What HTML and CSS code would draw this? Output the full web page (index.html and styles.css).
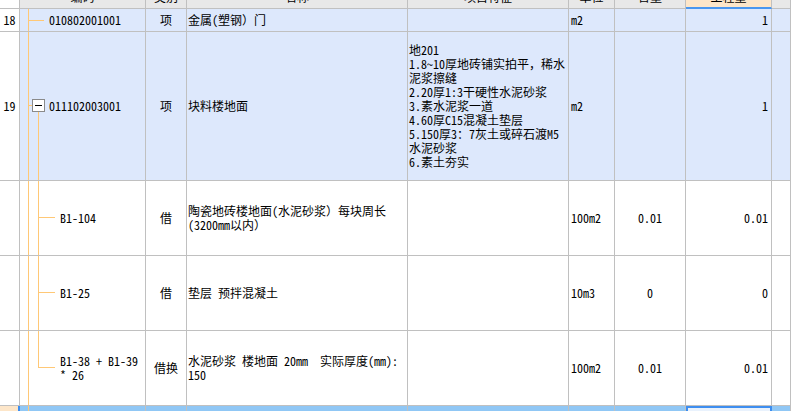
FILE: index.html
```html
<!DOCTYPE html>
<html lang="zh">
<head>
<meta charset="utf-8">
<link rel="stylesheet" href="styles.css">
</head>
<body>
<div class="grid">
  <!-- header -->
  <div class="c h num"></div>
  <div class="c h center"><span class="ht">编码</span></div>
  <div class="c h center"><span class="ht">类别</span></div>
  <div class="c h center"><span class="ht">名称</span></div>
  <div class="c h center"><span class="ht">项目特征</span></div>
  <div class="c h center"><span class="ht">单位</span></div>
  <div class="c h center"><span class="ht">含量</span></div>
  <div class="c h center sel-h"><span class="ht">工程量</span></div>
  <div class="c h"></div>

  <!-- row 18 -->
  <div class="c num center">18</div>
  <div class="c blue code tree-top">010802001001</div>
  <div class="c blue center">项</div>
  <div class="c blue pad">金属(塑钢）门</div>
  <div class="c blue pad"></div>
  <div class="c blue unit">m2</div>
  <div class="c blue center"></div>
  <div class="c blue right">1</div>
  <div class="c blue"></div>

  <!-- row 19 -->
  <div class="c num center">19</div>
  <div class="c blue code tree-parent"><span class="box"><span class="minus"></span></span>011102003001</div>
  <div class="c blue center">项</div>
  <div class="c blue pad">块料楼地面</div>
  <div class="c blue pad">地201<br>1.8~10厚地砖铺实拍平，稀水<br>泥浆擦缝<br>2.20厚1:3干硬性水泥砂浆<br>3.素水泥浆一道<br>4.60厚C15混凝土垫层<br>5.150厚3：7灰土或碎石渡M5<br>水泥砂浆<br>6.素土夯实</div>
  <div class="c blue unit">m2</div>
  <div class="c blue center"></div>
  <div class="c blue right">1</div>
  <div class="c blue"></div>

  <!-- child 1 -->
  <div class="c num"></div>
  <div class="c code tree-child">B1-104</div>
  <div class="c center">借</div>
  <div class="c pad">陶瓷地砖楼地面(水泥砂浆）每块周长<br>(3200mm以内）</div>
  <div class="c pad"></div>
  <div class="c unit">100m2</div>
  <div class="c center">0.01</div>
  <div class="c right">0.01</div>
  <div class="c"></div>

  <!-- child 2 -->
  <div class="c num"></div>
  <div class="c code tree-child">B1-25</div>
  <div class="c center">借</div>
  <div class="c pad">垫层 预拌混凝土</div>
  <div class="c pad"></div>
  <div class="c unit">10m3</div>
  <div class="c center">0</div>
  <div class="c right">0</div>
  <div class="c"></div>

  <!-- child 3 -->
  <div class="c num"></div>
  <div class="c code tree-last">B1-38 + B1-39<br>* 26</div>
  <div class="c center">借换</div>
  <div class="c pad">水泥砂浆 楼地面 20mm&nbsp;&nbsp;实际厚度(mm):<br>150</div>
  <div class="c pad"></div>
  <div class="c unit">100m2</div>
  <div class="c center">0.01</div>
  <div class="c right">0.01</div>
  <div class="c"></div>

  <!-- current row -->
  <div class="c num cur-num"></div>
  <div class="c cur code tree-top-only"></div>
  <div class="c cur"></div>
  <div class="c cur"></div>
  <div class="c cur"></div>
  <div class="c cur"></div>
  <div class="c cur"></div>
  <div class="c cur sel-cell"></div>
  <div class="c cur"></div>
</div>
</body>
</html>
```

FILE: styles.css
```css
html, body {
  margin: 0;
  padding: 0;
  overflow: hidden;
  background: #ffffff;
}

body {
  font-family: "Noto Sans Mono CJK SC", "Noto Sans CJK SC", monospace;
  font-size: 12px;
  line-height: 14px;
  color: #000000;
}

.grid {
  display: grid;
  grid-template-columns: 20px 126px 41px 221px 161px 46px 71px 86px 1fr;
  grid-template-rows: 9px 23px 149px 75px 75px 75px 20px;
  width: 791px;
  height: 411px;
}

.c {
  box-sizing: border-box;
  border-right: 1px solid #c0c0c0;
  border-bottom: 1px solid #c0c0c0;
  display: flex;
  align-items: center;
  white-space: nowrap;
  overflow: hidden;
}

.h {
  background: #e8e8e8;
  align-items: flex-start;
}

.ht {
  display: block;
  margin-top: -10px;
  line-height: 14px;
}

.sel-h {
  background: #fde6c9;
  border-bottom: 2px solid #4a97ef;
}

.center { justify-content: center; text-align: center; }
.right { justify-content: flex-end; padding-right: 3px; }
.pad { padding-left: 1px; }
.unit { padding-left: 2px; }

.num { background: #ffffff; }

.blue { background-color: #dde8fc; }

.code {
  --tree: #ffc876;
  background-repeat: no-repeat;
}

.tree-top {
  padding-left: 29px;
  background-image:
    linear-gradient(var(--tree), var(--tree)),
    linear-gradient(var(--tree), var(--tree));
  background-position: 8px 0, 8px 11px;
  background-size: 1px 100%, 16px 1px;
}

.tree-parent {
  padding-left: 12px;
  background-image:
    linear-gradient(var(--tree), var(--tree)),
    linear-gradient(var(--tree), var(--tree)),
    linear-gradient(var(--tree), var(--tree));
  background-position: 8px 0, 8px 73px, 18px 80px;
  background-size: 1px 100%, 4px 1px, 1px 100%;
}

.box {
  box-sizing: border-box;
  width: 13px;
  height: 13px;
  border: 1px solid #8a8a8a;
  background: #ffffff;
  display: flex;
  align-items: center;
  justify-content: center;
  margin-right: 4px;
  margin-top: -2px;
}

.minus {
  width: 7px;
  height: 1px;
  background: #000000;
}

.tree-child {
  padding-left: 40px;
  background-image:
    linear-gradient(var(--tree), var(--tree)),
    linear-gradient(var(--tree), var(--tree)),
    linear-gradient(var(--tree), var(--tree));
  background-position: 8px 0, 18px 0, 19px 36px;
  background-size: 1px 100%, 1px 100%, 16px 1px;
}

.tree-last {
  padding-left: 40px;
  background-image:
    linear-gradient(var(--tree), var(--tree)),
    linear-gradient(var(--tree), var(--tree)),
    linear-gradient(var(--tree), var(--tree));
  background-position: 8px 0, 18px 0, 19px 36px;
  background-size: 1px 100%, 1px 37px, 16px 1px;
}

.cur {
  background-color: #90c7f5;
  border-bottom: none;
}

.tree-top-only {
  background-image: linear-gradient(var(--tree), var(--tree));
  background-position: 8px 0;
  background-size: 1px 100%;
}

.cur-num {
  background: #fde6c9;
  border-right: 2px solid #3d8ef0;
  border-bottom: none;
}

.sel-cell {
  background: #e9f2fd;
  border: 2px solid #3d8ef0;
  border-bottom: none;
}
```
